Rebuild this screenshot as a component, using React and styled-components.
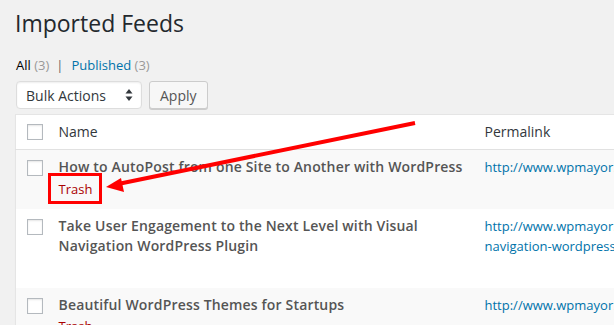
import React from "react";
import styled, { createGlobalStyle } from "styled-components";

const GlobalStyle = createGlobalStyle`
  html, body {
    margin: 0;
    padding: 0;
    background: #f1f1f1;
    overflow: hidden;
  }
  body {
    font-family: "Open Sans", "Liberation Sans", sans-serif;
    font-size: 13px;
    color: #444;
  }
`;

const Wrap = styled.div`
  position: relative;
  padding: 0 0 0 15px;
  width: 820px;
`;

const Title = styled.h1`
  margin: 0;
  padding: 9px 0 4px;
  font-size: 23px;
  font-weight: 400;
  line-height: 29px;
  color: #23282d;
`;

const Filters = styled.ul`
  display: flex;
  list-style: none;
  margin: 0;
  padding: 10px 0 0 1px;
  line-height: 26px;
  font-size: 13px;
  color: #666;
`;

const FilterItem = styled.li`
  a {
    color: ${(p) => (p.current ? "#000" : "#0073aa")};
    text-decoration: none;
  }
  span {
    color: #999;
  }
`;

const Sep = styled.span`
  margin: 0 8px 0 7px;
  color: #666;
`;

const Toolbar = styled.div`
  display: flex;
  gap: 7px;
  padding: 3px 0 5px 1px;
`;

const Select = styled.div`
  display: flex;
  align-items: center;
  justify-content: space-between;
  box-sizing: border-box;
  width: 126px;
  height: 28px;
  padding: 0 8px 0 9px;
  background: #fff;
  border: 1px solid #ddd;
  border-radius: 4px;
  box-shadow: inset 0 1px 2px rgba(0, 0, 0, 0.07);
  font-size: 14px;
  color: #32373c;
`;

const Button = styled.div`
  display: flex;
  align-items: center;
  box-sizing: border-box;
  height: 28px;
  padding: 0 10px;
  background: #f7f7f7;
  border: 1px solid #ccc;
  border-radius: 3px;
  box-shadow: 0 1px 0 #ccc;
  font-size: 14px;
  color: #555;
`;

const Table = styled.table`
  width: 800px;
  border-collapse: collapse;
  border-spacing: 0;
  background: #fff;
  border: 1px solid #e5e5e5;
  box-shadow: 0 1px 1px rgba(0, 0, 0, 0.04);
  table-layout: fixed;
`;

const HeadCell = styled.th`
  text-align: left;
  font-weight: 400;
  font-size: 14px;
  color: #32373c;
  line-height: 20px;
  padding: 0 10px;
  height: 34px;
  border-bottom: 1px solid #e1e1e1;
  vertical-align: middle;
`;

const CheckCell = styled.td`
  padding: ${(p) => (p.head ? "0 0 0 11px" : "10px 0 0 11px")};
  vertical-align: ${(p) => (p.head ? "middle" : "top")};
  border-bottom: ${(p) => (p.head ? "1px solid #e1e1e1" : "none")};
  height: ${(p) => (p.head ? "34px" : "auto")};
`;

const Box = styled.div`
  width: 16px;
  height: 16px;
  box-sizing: border-box;
  border: 1px solid #b4b9be;
  background: #fff;
  box-shadow: inset 0 1px 2px rgba(0, 0, 0, 0.1);
`;

const Row = styled.tr`
  background: ${(p) => (p.alt ? "#f9f9f9" : "#fff")};
`;

const Cell = styled.td`
  padding: 7px 10px 9.5px;
  vertical-align: top;
`;

const RowTitle = styled.div`
  font-size: 14px;
  font-weight: 600;
  letter-spacing: 0.17px;
  line-height: 19.5px;
  color: #555;
`;

const RowActions = styled.div`
  padding-top: 2px;
  height: 21px;
  line-height: 20px;
  font-size: 13px;
  color: #a00;
  visibility: ${(p) => (p.show ? "visible" : "hidden")};
`;

const Link = styled.div`
  padding-top: 1px;
  font-size: 13px;
  line-height: 19.5px;
  color: #0073aa;
  white-space: nowrap;
  overflow: hidden;
  & + & {
    padding-top: 0;
  }
`;

const Annotation = styled.svg`
  position: absolute;
  left: 0;
  top: 0;
  pointer-events: none;
`;

const feeds = [
  {
    title: "How to AutoPost from one Site to Another with WordPress",
    link: ["http://www.wpmayor.com/how-to-autopost"],
    actions: true,
  },
  {
    title: "Take User Engagement to the Next Level with Visual Navigation WordPress Plugin",
    link: ["http://www.wpmayor.com/take-user-engagement-", "navigation-wordpress-plugin/"],
  },
  {
    title: "Beautiful WordPress Themes for Startups",
    link: ["http://www.wpmayor.com/beautiful-wordpress"],
    actions: true,
  },
];

function SortArrows() {
  return (
    <svg width="8" height="14" viewBox="0 0 8 14">
      <path d="M4 1 L7.5 5.5 L0.5 5.5 Z" fill="#32373c" />
      <path d="M4 13 L7.5 8.5 L0.5 8.5 Z" fill="#32373c" />
    </svg>
  );
}

export default function App() {
  return (
    <Wrap>
      <GlobalStyle />
      <Title>Imported Feeds</Title>
      <Filters>
        <FilterItem current>
          <a>All</a> <span>(3)</span>
        </FilterItem>
        <Sep>|</Sep>
        <FilterItem>
          <a>Published</a> <span>(3)</span>
        </FilterItem>
      </Filters>
      <Toolbar>
        <Select>
          Bulk Actions
          <SortArrows />
        </Select>
        <Button>Apply</Button>
      </Toolbar>
      <Table>
        <colgroup>
          <col style={{ width: "33px" }} />
          <col style={{ width: "426px" }} />
          <col />
        </colgroup>
        <thead>
          <tr>
            <CheckCell head>
              <Box />
            </CheckCell>
            <HeadCell>Name</HeadCell>
            <HeadCell>Permalink</HeadCell>
          </tr>
        </thead>
        <tbody>
          {feeds.map((f, i) => (
            <Row key={i} alt={i % 2 === 0}>
              <CheckCell>
                <Box />
              </CheckCell>
              <Cell>
                <RowTitle>{f.title}</RowTitle>
                <RowActions show={f.actions}>Trash</RowActions>
              </Cell>
              <Cell>
                {f.link.map((l) => (
                  <Link key={l}>{l}</Link>
                ))}
              </Cell>
            </Row>
          ))}
        </tbody>
      </Table>
      <Annotation width="614" height="325" viewBox="0 0 614 325">
        <rect x="49.5" y="174.5" width="51" height="28" fill="none" stroke="#f00" strokeWidth="3" />
        <line x1="415" y1="123" x2="118" y2="184" stroke="#f00" strokeWidth="4" />
        <path d="M106 187 L121 178 L124 192 Z" fill="#f00" />
      </Annotation>
    </Wrap>
  );
}
